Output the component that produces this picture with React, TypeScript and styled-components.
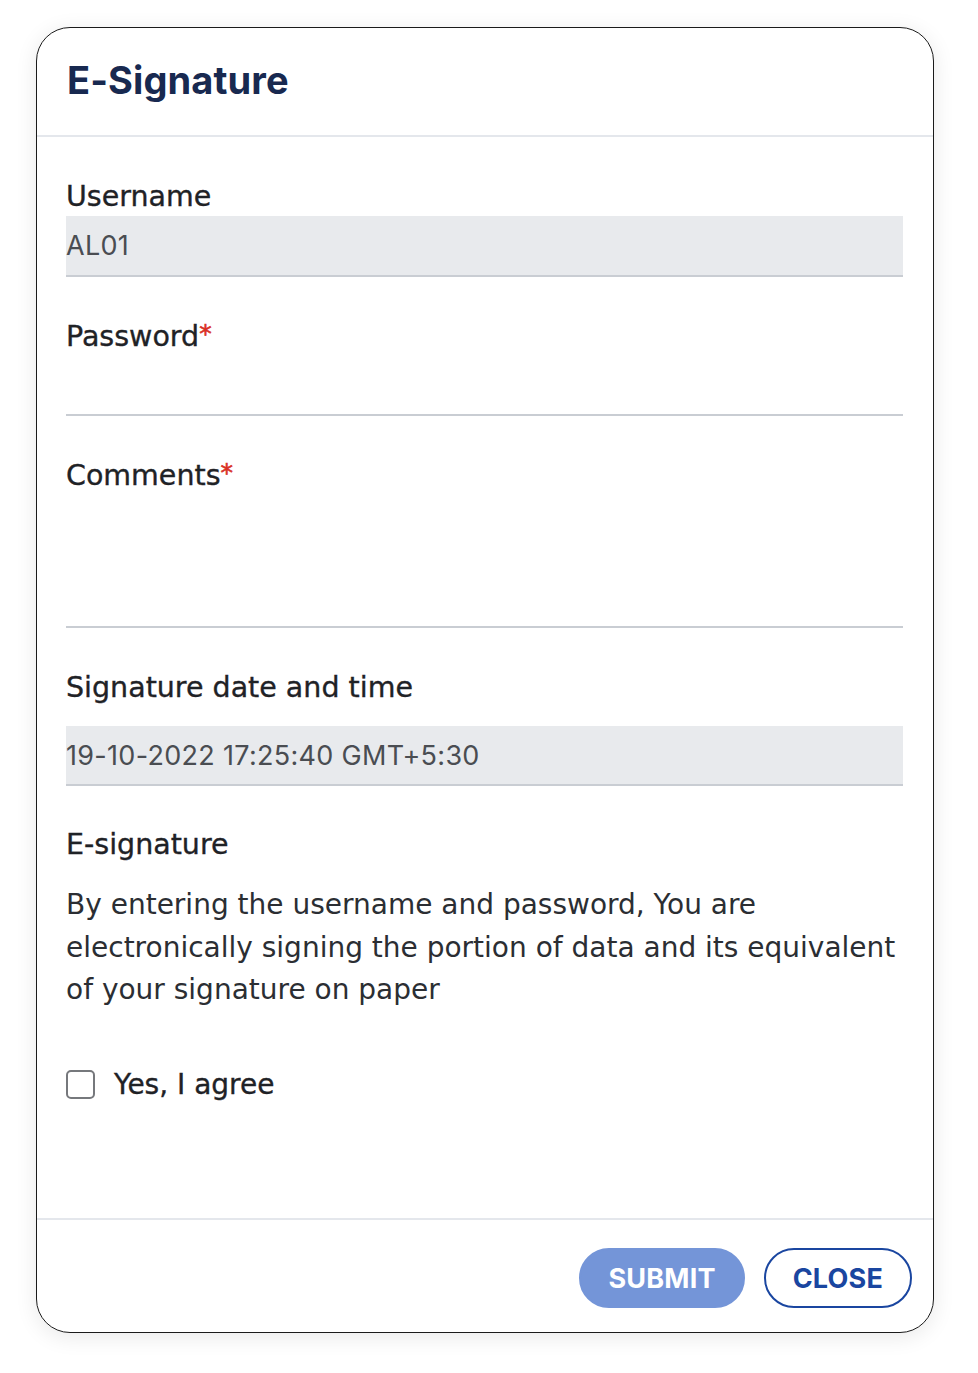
import React from "react";
import styled, { createGlobalStyle } from "styled-components";

const Global = createGlobalStyle`
  html, body { margin: 0; padding: 0; background: #ffffff; }
  body { font-family: "DejaVu Sans", "Noto Sans", sans-serif; }
  * { box-sizing: border-box; }
`;

const Page = styled.div`
  width: 978px;
  height: 1373px;
  padding: 27px 44px 0 36px;
`;

const Card = styled.div`
  width: 898px;
  height: 1306px;
  border: 1.5px solid #1b1b1b;
  border-radius: 34px;
  background: #fff;
  box-shadow: 0 4px 22px rgba(0, 0, 0, 0.09);
  display: flex;
  flex-direction: column;
  overflow: hidden;
`;

const Header = styled.div`
  height: 109px;
  padding: 0 30px 4px;
  display: flex;
  align-items: center;
  border-bottom: 2px solid #e4e7ec;
`;

const Title = styled.h1`
  margin: 0;
  font-family: Inter, "Noto Sans", sans-serif;
  font-size: 38px;
  font-weight: 700;
  color: #182950;
  letter-spacing: 0.1px;
`;

const Body = styled.div`
  flex: 1;
  padding: 38px 30px 0 29px;
  display: flex;
  flex-direction: column;
`;

const Label = styled.div<{ $mt?: number; $mb?: number }>`
  font-size: 28.5px;
  line-height: 44px;
  height: 40px;
  color: #1f2226;
  -webkit-text-stroke: 0.35px #1f2226;
  margin-top: ${(p) => p.$mt ?? 0}px;
  margin-bottom: ${(p) => p.$mb ?? 0}px;
`;

const Star = styled.span`
  color: #d93025;
  -webkit-text-stroke: 0.6px #d93025;
  font-size: 25px;
  line-height: 1;
  vertical-align: 4px;
`;

const Field = styled.div<{ $filled?: boolean; $h?: number }>`
  height: ${(p) => p.$h ?? 60}px;
  background: ${(p) => (p.$filled ? "#e8eaed" : "#fff")};
  border-bottom: 2px solid #c9cdd3;
  display: flex;
  align-items: center;
  font-family: Inter, "Noto Sans", sans-serif;
  font-size: 27px;
  color: #4a4d52;
  letter-spacing: 0.3px;
`;

const Paragraph = styled.p`
  margin: 0;
  padding-top: 1px;
  font-size: 28px;
  line-height: 42.5px;
  color: #2b2e33;
`;

const CheckRow = styled.label`
  display: flex;
  align-items: center;
  gap: 19px;
  margin-top: 56px;
  font-size: 28px;
  color: #1f2226;
  -webkit-text-stroke: 0.35px #1f2226;
`;

const Box = styled.span`
  width: 29px;
  height: 29px;
  border: 2px solid #76787c;
  border-radius: 5px;
  display: inline-block;
  flex-shrink: 0;
`;

const Footer = styled.div`
  height: 114px;
  border-top: 2px solid #e4e7ec;
  display: flex;
  justify-content: flex-end;
  align-items: flex-start;
  padding: 28px 21px 0 0;
  gap: 19px;
`;

const Button = styled.button<{ $primary?: boolean }>`
  height: 60px;
  padding: 0 27px;
  border-radius: 30px;
  font-family: Inter, "Noto Sans", sans-serif;
  font-size: 27px;
  font-weight: 700;
  letter-spacing: 0.2px;
  border: 2px solid ${(p) => (p.$primary ? "#7495d8" : "#1a46a0")};
  background: ${(p) => (p.$primary ? "#7495d8" : "#fff")};
  color: ${(p) => (p.$primary ? "#fff" : "#1a46a0")};
`;

export default function App() {
  return (
    <>
      <Global />
      <Page>
        <Card>
          <Header>
            <Title>E-Signature</Title>
          </Header>
          <Body>
            <Label $mb={1}>Username</Label>
            <Field $filled $h={61}>AL01</Field>
            <Label $mt={38} $mb={1}>
              Password<Star>*</Star>
            </Label>
            <Field />
            <Label $mt={38} $mb={1}>
              Comments<Star>*</Star>
            </Label>
            <Field $h={133} />
            <Label $mt={38} $mb={20}>Signature date and time</Label>
            <Field $filled>19-10-2022 17:25:40 GMT+5:30</Field>
            <Label $mt={37} $mb={20}>E-signature</Label>
            <Paragraph>
              By entering the username and password, You are electronically signing the portion of data and its
              equivalent of your signature on paper
            </Paragraph>
            <CheckRow>
              <Box />
              Yes, I agree
            </CheckRow>
          </Body>
          <Footer>
            <Button $primary>SUBMIT</Button>
            <Button>CLOSE</Button>
          </Footer>
        </Card>
      </Page>
    </>
  );
}
